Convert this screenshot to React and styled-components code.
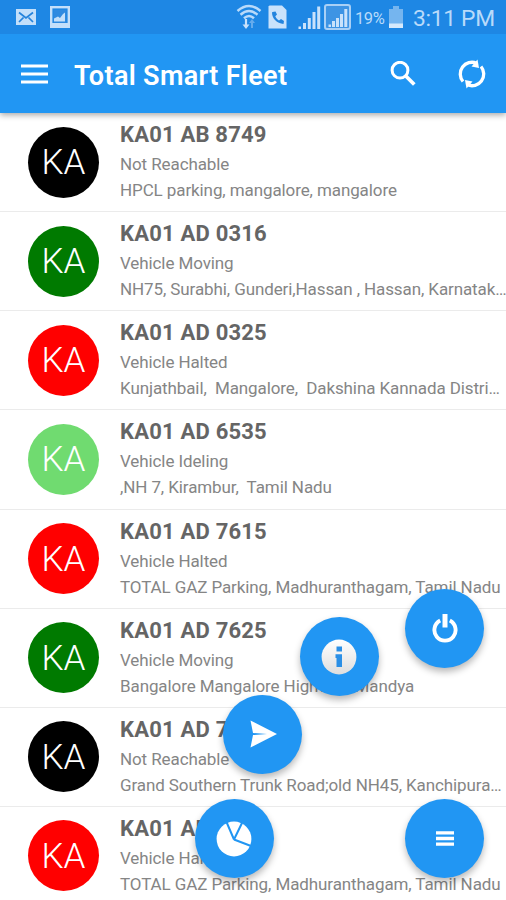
import React from 'react';
import styled, { createGlobalStyle } from 'styled-components';

const vehicles = [
  { id: 1, number: 'KA01 AB 8749', status: 'Not Reachable', address: 'HPCL parking, mangalore, mangalore' },
  { id: 2, number: 'KA01 AD 0316', status: 'Vehicle Moving', address: 'NH75, Surabhi, Gunderi,Hassan , Hassan, Karnatak…' },
  { id: 3, number: 'KA01 AD 0325', status: 'Vehicle Halted', address: 'Kunjathbail,  Mangalore,  Dakshina Kannada Distri…' },
  { id: 4, number: 'KA01 AD 6535', status: 'Vehicle Ideling', address: ',NH 7, Kirambur,  Tamil Nadu' },
  { id: 5, number: 'KA01 AD 7615', status: 'Vehicle Halted', address: 'TOTAL GAZ Parking, Madhuranthagam, Tamil Nadu' },
  { id: 6, number: 'KA01 AD 7625', status: 'Vehicle Moving', address: 'Bangalore Mangalore Highway, Mandya' },
  { id: 7, number: 'KA01 AD 7635', status: 'Not Reachable', address: 'Grand Southern Trunk Road;old NH45, Kanchipura…' },
  { id: 8, number: 'KA01 AD 7645', status: 'Vehicle Halted', address: 'TOTAL GAZ Parking, Madhuranthagam, Tamil Nadu' },
];

const statusColor = {
  'Not Reachable': '#000000',
  'Vehicle Moving': '#007a00',
  'Vehicle Halted': '#ff0000',
  'Vehicle Ideling': '#70db70',
};

const StatusBar = () => (
  <SStatusBar>
    <SStatusGroup>
      <svg width="20" height="16" viewBox="0 0 20 16">
        <rect width="20" height="16" fill="#c3dffa" />
        <path d="M3 3.5l7 5.5 7-5.5M3 13l4.5-4.5M17 13l-4.5-4.5" fill="none" stroke="#2483dc" strokeWidth="1.7" />
      </svg>
      <svg width="20" height="22" viewBox="0 0 20 22">
        <rect x="1.2" y="1.2" width="17.6" height="19.6" fill="none" stroke="#c3dffa" strokeWidth="2.4" />
        <rect x="3.5" y="4" width="13" height="13" fill="#2f8ae0" />
        <path d="M4 15.5v-3l4-2 2 1.5 3-4 2-1.5v9z" fill="#c3dffa" />
        <path d="M2 18.5h16" stroke="#c3dffa" strokeWidth="3" />
      </svg>
    </SStatusGroup>
    <SStatusGroup $right>
      <svg width="26" height="26" viewBox="0 0 26 26">
        <g fill="none" stroke="#b9dafa" strokeWidth="2.5">
          <path d="M1.5 7q11.5-10 23 0" />
          <path d="M4.5 10.8q8.5-7.5 17 0" />
          <path d="M8 14.3q5-4.5 10 0" />
        </g>
        <path d="M10 15v7" stroke="#c9e2fb" strokeWidth="2.2" />
        <path d="M6.5 20.5h7L10 25z" fill="#c9e2fb" />
        <path d="M16 24v-6" stroke="#64abed" strokeWidth="2" />
        <path d="M13 19h6l-3-4z" fill="#64abed" />
      </svg>
      <SSimIcon width="19" height="24" viewBox="0 0 19 24">
        <path d="M1.5 0.5H14L18.5 5v18.5h-18v-22z" fill="#c9e2fb" />
        <path d="M4 7.5c0 6 5 11 11.5 11.5l.5-3-3-2-2 1.5c-1.5-1-3-2.5-3.700-4.300L9 9.500 7.500 6.500 4.500 7z" fill="#2384de" />
      </SSimIcon>
      <SSignalIcon width="23" height="24" viewBox="0 0 23 24">
        <path d="M.5 24v-2.500h2.500V24zM5 24v-6h3v6zM9.800 24V13h3v11zM14.500 24V7h3v17zM19.200 24V1.500h3V24z" fill="#c9e2fb" />
      </SSignalIcon>
      <SSignalBox width="27" height="26" viewBox="0 0 27 26">
        <rect x="1" y="1" width="25" height="24" rx="2" fill="#3e94e4" stroke="#a9d0f6" strokeWidth="2" />
        <path d="M4.500 23v-2.500h2.500V23zM8 23v-6h3v6zM12 23v-9h3v9zM16 23V10h3v13zM20.300 23V5h3v18z" fill="#c9e2fb" />
      </SSignalBox>
      <SBattery>19%</SBattery>
      <SBatteryIcon width="16" height="22" viewBox="0 0 16 22">
        <path d="M5 0h6v3h4v19H1V3h4z" fill="#75b5ef" />
        <path d="M1 17.500h14V22H1z" fill="#d5e9fc" />
      </SBatteryIcon>
      <SClock>3:11 PM</SClock>
    </SStatusGroup>
  </SStatusBar>
);

const Toolbar = () => (
  <SToolbar>
    <svg width="27" height="20" viewBox="0 0 27 20">
      <path d="M0 2h27M0 10h27M0 18h27" stroke="#fff" strokeWidth="3.2" />
    </svg>
    <STitle>Total Smart Fleet</STitle>
    <svg width="26" height="26" viewBox="0 0 26 26" fill="none" stroke="#fff">
      <circle cx="10" cy="9.2" r="7.9" strokeWidth="3" />
      <path d="M15.8 15l8.5 8.5" strokeWidth="3.7" />
    </svg>
    <SRefreshIcon width="28" height="30" viewBox="0 0 28 30">
      <g fill="none" stroke="#fff" strokeWidth="3.3">
        <path d="M5 22.5A11.7 11.7 0 0 1 18.5 4.2" />
        <path d="M23 7.5A11.7 11.7 0 0 1 9.5 25.8" />
      </g>
      <path d="M19.5 0.5l1.5 8.5-7.5-1.5z" fill="#fff" />
      <path d="M8.5 29.5l-1.5-8.5 7.5 1.5z" fill="#fff" />
    </SRefreshIcon>
  </SToolbar>
);

const Vehicle = ({ vehicle }) => (
  <SRow>
    <SAvatar $color={statusColor[vehicle.status]}>KA</SAvatar>
    <SInfo>
      <SNumber>{vehicle.number}</SNumber>
      <SText>{vehicle.status}</SText>
      <SText>{vehicle.address}</SText>
    </SInfo>
  </SRow>
);

const FloatingMenu = () => (
  <>
    <SFab $x={444.5} $y={628}>
      <svg width="26" height="30" viewBox="0 0 26 30" fill="none" stroke="#fff">
        <path d="M8.2 7.6A10.6 10.6 0 1 0 17.8 7.6" strokeWidth="3.9" />
        <path d="M13 1v13.5" strokeWidth="5" />
      </svg>
    </SFab>
    <SFab $x={339} $y={656.5}>
      <svg width="36" height="36" viewBox="0 0 36 36">
        <defs>
          <linearGradient id="info" x1="0" y1="0" x2="0" y2="1">
            <stop offset="0" stopColor="#fff" />
            <stop offset="1" stopColor="#dedede" />
          </linearGradient>
        </defs>
        <circle cx="18" cy="18" r="17.4" fill="url(#info)" />
        <path d="M15.5 7.5h5.5v5h-5.5zM14.5 15.3H21V28h-5.5v-9h-1z" fill="#2a8fe6" />
      </svg>
    </SFab>
    <SFab $x={262.5} $y={734}>
      <svg width="28" height="28" viewBox="0 0 28 28">
        <path d="M1.5 0.5L28 14 1.5 27.500 4 15l14-1-14-1z" fill="#fff" />
      </svg>
    </SFab>
    <SFab $x={234} $y={838.5}>
      <svg width="36" height="36" viewBox="0 0 36 36">
        <circle cx="18" cy="18" r="17.4" fill="#fff" />
        <path d="M18 18.5L10.5 1M18 18.5L26 2M18 18.5L35 25" stroke="#2196f3" strokeWidth="2" />
      </svg>
    </SFab>
    <SFab $x={444.5} $y={838.5}>
      <svg width="18" height="15" viewBox="0 0 18 15">
        <path d="M0 1.8h18M0 7.5h18M0 13.2h18" stroke="#fff" strokeWidth="3.3" />
      </svg>
    </SFab>
  </>
);

const App = () => {
  return (
    <>
      <GlobalStyle />
      <SScreen>
        <SHeader>
          <StatusBar />
          <Toolbar />
        </SHeader>
        <SList>
          {vehicles.map(vehicle => (
            <Vehicle key={vehicle.id} vehicle={vehicle} />
          ))}
        </SList>
        <FloatingMenu />
      </SScreen>
    </>
  );
};

export default App;

const GlobalStyle = createGlobalStyle`
  * {
    box-sizing: border-box;
  }
  body {
    margin: 0;
    font-family: Roboto, 'Liberation Sans', sans-serif;
  }
  svg {
    display: block;
    flex-shrink: 0;
  }
`;
const SScreen = styled.div`
  position: relative;
  display: flex;
  flex-direction: column;
  width: 506px;
  height: 900px;
  overflow: hidden;
  background: #fff;
`;
const SHeader = styled.header`
  position: relative;
  z-index: 1;
  flex-shrink: 0;
  height: 113px;
  background: #2196f3;
  box-shadow: 0 2px 6px rgba(0, 0, 0, 0.35);
`;
const SStatusBar = styled.div`
  display: flex;
  justify-content: space-between;
  height: 34px;
  padding: 0 11px 0 16px;
  background: #1e87e4;
  color: #b9dafa;
`;
const SStatusGroup = styled.div`
  display: flex;
  align-items: center;
  gap: ${props => (props.$right ? 0 : '14px')};
`;
const SSimIcon = styled.svg`
  margin-left: 6px;
`;
const SSignalIcon = styled.svg`
  margin-left: 11px;
`;
const SSignalBox = styled.svg`
  margin-left: 3px;
`;
const SBattery = styled.span`
  width: 29px;
  margin-left: 4px;
  margin-right: 1px;
  padding-top: 2px;
  font-size: 16.5px;
  letter-spacing: -0.4px;
  white-space: nowrap;
`;
const SBatteryIcon = styled.svg`
  margin-left: 3px;
`;
const SClock = styled.span`
  width: 82px;
  margin-left: 9px;
  padding-top: 3px;
  font-size: 22.8px;
  letter-spacing: -0.3px;
  white-space: nowrap;
`;
const SToolbar = styled.div`
  display: flex;
  align-items: center;
  height: 79px;
  padding: 0 20px 0 21px;
`;
const STitle = styled.h1`
  flex: 1;
  margin: 4px 0 0 26px;
  color: #fff;
  font-size: 27px;
  font-weight: 600;
  line-height: 32px;
  letter-spacing: 0.33px;
`;
const SRefreshIcon = styled.svg`
  margin-left: 42px;
`;
const SList = styled.div`
  flex: 1;
  min-height: 0;
`;
const SRow = styled.div`
  display: flex;
  height: 99.14px;
  padding: 8.1px 0 0 28px;
  border-bottom: 1px solid #ebebeb;
`;
const SAvatar = styled.div`
  display: flex;
  align-items: center;
  justify-content: center;
  flex-shrink: 0;
  width: 71px;
  height: 71px;
  margin-top: 5.5px;
  padding-top: 1px;
  border-radius: 50%;
  background: ${props => props.$color};
  color: #fff;
  font-size: 35px;
  font-weight: 300;
`;
const SInfo = styled.div`
  flex: 1;
  min-width: 0;
  margin-left: 21px;
`;
const SNumber = styled.div`
  margin-bottom: 2px;
  color: #656565;
  font-size: 22px;
  font-weight: 700;
  line-height: 28px;
  letter-spacing: 0.2px;
`;
const SText = styled.div`
  color: #858585;
  font-size: 17px;
  line-height: 26px;
  letter-spacing: -0.1px;
  white-space: pre;
`;
const SFab = styled.button`
  position: absolute;
  z-index: 2;
  left: ${props => props.$x - 39.5}px;
  top: ${props => props.$y - 39.5}px;
  display: flex;
  align-items: center;
  justify-content: center;
  width: 79px;
  height: 79px;
  padding: 0;
  border: none;
  border-radius: 50%;
  background: #2196f3;
  box-shadow: 0 4px 7px rgba(0, 0, 0, 0.28);
`;
